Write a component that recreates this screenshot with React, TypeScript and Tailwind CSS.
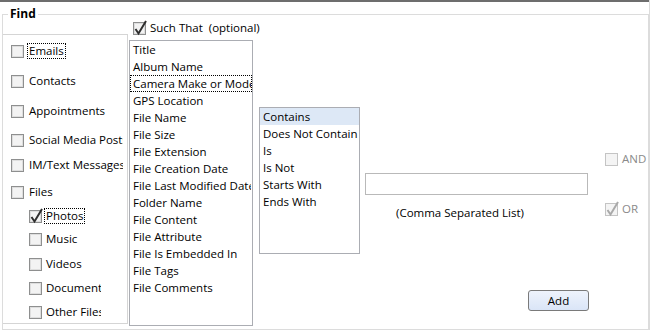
import React from 'react';

type Kind = { label: string; mt: string; sub?: boolean; checked?: boolean; focus?: boolean };

const kinds: Kind[] = [
  { label: 'Emails', mt: 'mt-[8px]', focus: true },
  { label: 'Contacts', mt: 'mt-[14px]' },
  { label: 'Appointments', mt: 'mt-[14px]' },
  { label: 'Social Media Posts', mt: 'mt-[13px]' },
  { label: 'IM/Text Messages', mt: 'mt-[9px]' },
  { label: 'Files', mt: 'mt-[11px]' },
  { label: 'Photos', mt: 'mt-[8px]', sub: true, checked: true, focus: true },
  { label: 'Music', mt: 'mt-[7px]', sub: true },
  { label: 'Videos', mt: 'mt-[9px]', sub: true },
  { label: 'Documents', mt: 'mt-[8px]', sub: true },
  { label: 'Other Files', mt: 'mt-[8px]', sub: true },
];

const fields = [
  'Title', 'Album Name', 'Camera Make or Model', 'GPS Location', 'File Name', 'File Size',
  'File Extension', 'File Creation Date', 'File Last Modified Date', 'Folder Name', 'File Content',
  'File Attribute', 'File Is Embedded In', 'File Tags', 'File Comments',
];

const operators = ['Contains', 'Does Not Contain', 'Is', 'Is Not', 'Starts With', 'Ends With'];

const CheckBox: React.FC<{ checked?: boolean; disabled?: boolean }> = ({ checked, disabled }) => (
  <span
    className={`relative inline-block w-[13px] h-[13px] shrink-0 border ${
      disabled
        ? 'border-[#c4c4c4] bg-[#f4f4f4]'
        : 'border-[#8e8f8f] bg-[#f3f3f3] shadow-[inset_0_0_0_1px_#dedede]'
    }`}
  >
    {checked && (
      <svg className="absolute left-0 top-[-4px] overflow-visible" width="13" height="16" viewBox="0 0 13 16">
        <path d="M1.5 10 L4.5 14.5 L12 2" fill="none" stroke={disabled ? '#a9a9a9' : '#2e2e2e'} strokeWidth="2" />
      </svg>
    )}
  </span>
);

const ListItem: React.FC<{ text: string; focus?: boolean; selected?: boolean }> = ({ text, focus, selected }) => (
  <div
    className={`h-[17px] leading-[15px] border pl-[2px] whitespace-nowrap overflow-hidden ${
      focus ? 'border-dotted border-black' : 'border-transparent'
    } ${selected ? 'bg-[#dde8f6]' : ''}`}
  >
    {text}
  </div>
);

export default function App() {
  return (
    <div className="w-[650px] h-[330px] bg-white text-black text-[11.5px] border-r border-[#dcdcdc] [font-family:'Open_Sans',sans-serif] overflow-hidden">
      <div className="h-[2px] bg-[#6d6d6d]" />
      <fieldset className="ml-[2px] mt-[5px] w-[647px] h-[323px] min-w-0 border border-[#dcdcdc]">
        <legend className="ml-[5px] px-[2px] font-bold text-[12px] leading-[14px]">Find</legend>
        <div className="flex items-start">
          {/* item types */}
          <div className="mt-[13px] w-[125px] h-[290px] shrink-0 border-t border-r border-b border-[#d5d5d5] flex flex-col">
            {kinds.map(k => (
              <div key={k.label} className={`flex items-center h-[16px] ${k.mt} ${k.sub ? 'pl-[26px]' : 'pl-[8px]'}`}>
                <CheckBox checked={k.checked} />
                <span
                  className={`border pl-[1px] pr-[1px] leading-[14px] whitespace-nowrap overflow-hidden ${
                    k.sub ? 'ml-[2px] max-w-[58px]' : 'ml-[3px] max-w-[97px]'
                  } ${k.focus ? 'border-dotted border-black' : 'border-transparent'}`}
                >
                  {k.label}
                </span>
              </div>
            ))}
          </div>

          {/* field list */}
          <div className="ml-[1px] w-[124px] shrink-0 flex flex-col">
            <div className="flex items-center h-[14px] pl-[4px] whitespace-nowrap">
              <CheckBox checked />
              <span className="ml-[4px] whitespace-pre">Such That  (optional)</span>
            </div>
            <div className="mt-[5px] w-[124px] h-[286px] border border-[#abadb3] overflow-hidden">
              {fields.map(f => (
                <ListItem key={f} text={f} focus={f === 'Camera Make or Model'} />
              ))}
            </div>
          </div>

          {/* operators */}
          <div className="ml-[6px] mt-[86px] w-[101px] h-[147px] shrink-0 border border-[#abadb3] overflow-hidden">
            {operators.map((o, i) => (
              <ListItem key={o} text={o} selected={i === 0} />
            ))}
          </div>

          {/* value */}
          <div className="ml-[5px] w-[224px] shrink-0 flex flex-col">
            <input type="text" className="mt-[152px] w-[223px] h-[22px] border border-[#b9b9b9] outline-none px-[3px]" />
            <div className="mt-[10px] h-[16px] leading-[16px] pl-[31px]">(Comma Separated List)</div>
            <button className="mt-[69px] self-end w-[61px] h-[21px] rounded-[3px] border border-[#7a7a7a] bg-gradient-to-b from-[#eef3fc] to-[#dae5f7] leading-[19px]">
              Add
            </button>
          </div>

          {/* join */}
          <div className="ml-[16px] flex flex-col text-[#8a8a8a]">
            <div className="mt-[130px] flex items-center h-[16px]">
              <CheckBox disabled />
              <span className="ml-[4px]">AND</span>
            </div>
            <div className="mt-[34px] flex items-center h-[16px]">
              <CheckBox disabled checked />
              <span className="ml-[4px]">OR</span>
            </div>
          </div>
        </div>
      </fieldset>
    </div>
  );
}
